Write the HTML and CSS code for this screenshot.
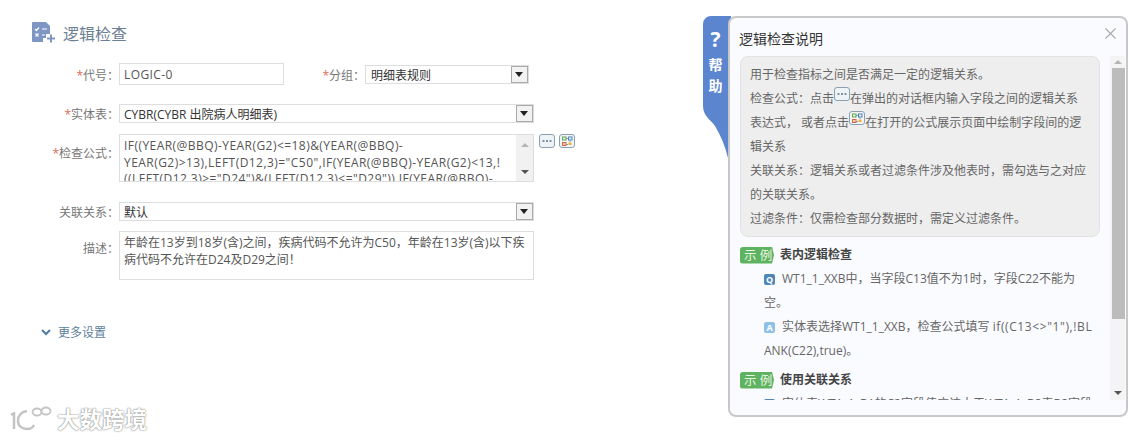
FILE: index.html
```html
<!DOCTYPE html>
<html lang="en">
<head>
    <meta charset="UTF-8">
    <meta name="viewport" content="width=device-width, initial-scale=1.0">
    <title>逻辑检查</title>
    <link rel="stylesheet" href="styles.css">
</head>
<body>
    <svg class="defs" width="0" height="0">
        <symbol id="icon-more" viewBox="0 0 16 14">
            <rect x="0.5" y="0.5" width="15" height="13" rx="2.5" fill="#eef3f6" stroke="#8ba0b3"/>
            <rect x="3.500" y="6" width="2" height="2" fill="#7d93a6"/>
            <rect x="7" y="6" width="2" height="2" fill="#7d93a6"/>
            <rect x="10.500" y="6" width="2" height="2" fill="#7d93a6"/>
        </symbol>
        <symbol id="icon-formula" viewBox="0 0 16 14">
            <rect x="0.5" y="0.5" width="15" height="13" rx="2.5" fill="#f2f4f6" stroke="#8ba0b3"/>
            <path d="M7 4.500h2M11 6.500v1.500M7 10.500h2" stroke="#8ba0b3" fill="none"/>
            <rect x="3.500" y="3" width="3.500" height="3" fill="none" stroke="#5aa84f"/>
            <rect x="9.500" y="3" width="3.500" height="3" fill="none" stroke="#4a7fc1"/>
            <rect x="3.500" y="8.500" width="3.500" height="3" fill="#f6d9a0" stroke="#d9634f"/>
            <rect x="9.500" y="8.500" width="3" height="2.500" fill="#e8b23c"/>
        </symbol>
    </svg>

    <div class="page">
        <div class="page-title">
            <svg class="title-icon" width="24" height="22" viewBox="0 0 24 22">
                <path d="M1 0h13l4 4v8h-4v4h-3v4H1a1 1 0 0 1-1-1V1a1 1 0 0 1 1-1z" fill="#7d96c4"/>
                <path d="M3 7l1.500 1.500L7 5.500M10 7h5M3.500 11.500l3 3M6.500 11.500l-3 3M10 13h3" stroke="#fff" stroke-width="1.200" fill="none"/>
                <path d="M15 16.500h8M19 12.500v8" stroke="#7d96c4" stroke-width="2" fill="none"/>
            </svg>
            <span>逻辑检查</span>
        </div>

        <div class="row row-code">
            <label class="label"><em>*</em>代号：</label>
            <div class="input">LOGIC-0</div>
            <label class="label label-group"><em>*</em>分组：</label>
            <div class="select select-group"><span>明细表规则</span><i class="arrow"></i></div>
        </div>

        <div class="row row-entity">
            <label class="label"><em>*</em>实体表：</label>
            <div class="select"><span>CYBR(CYBR 出院病人明细表)</span><i class="arrow"></i></div>
        </div>

        <div class="row row-top row-formula">
            <label class="label"><em>*</em>检查公式：</label>
            <div class="textarea formula">
                <div class="formula-text">IF((YEAR(@BBQ)-YEAR(G2)&lt;=18)&amp;(YEAR(@BBQ)-<br>YEAR(G2)&gt;13),LEFT(D12,3)="C50",IF(YEAR(@BBQ)-YEAR(G2)&lt;13,!<br>((LEFT(D12,3)&gt;="D24")&amp;(LEFT(D12,3)&lt;="D29")),IF(YEAR(@BBQ)-</div>
                <div class="mini-scroll"><i class="up"></i><i class="down"></i></div>
            </div>
            <div class="formula-tools">
                <svg width="16" height="14"><use href="#icon-more"/></svg>
                <svg width="16" height="14"><use href="#icon-formula"/></svg>
            </div>
        </div>

        <div class="row row-relation">
            <label class="label">关联关系：</label>
            <div class="select"><span>默认</span><i class="arrow"></i></div>
        </div>

        <div class="row row-top row-desc">
            <label class="label">描述：</label>
            <div class="textarea desc">年龄在13岁到18岁(含)之间，疾病代码不允许为C50，年龄在13岁(含)以下疾<br>病代码不允许在D24及D29之间！</div>
        </div>

        <div class="more">
            <svg width="10" height="7" viewBox="0 0 10 7"><path d="M1 1l4 4 4-4" fill="none" stroke="#4d7ba6" stroke-width="2"/></svg>
            <span>更多设置</span>
        </div>
    </div>

    <!-- help panel floats over the page -->
    <div class="help-tab">
        <svg class="help-tab-bg" width="28" height="142" viewBox="0 0 28 142">
            <path d="M8 0H28V142H25C22 130 18 120 12 110C8 104 0 100 0 90V8A8 8 0 0 1 8 0z" fill="#5b86cf"/>
        </svg>
        <b class="help-q">?</b>
        <b class="help-word">帮</b>
        <b class="help-word">助</b>
    </div>
    <div class="help">
        <div class="help-head">
            <span>逻辑检查说明</span>
            <svg class="help-close" width="11" height="11" viewBox="0 0 11 11"><path d="M0.500 0.500l10 10M10.500 0.500l-10 10" stroke="#aaa" stroke-width="1.100"/></svg>
        </div>
        <div class="help-body">
            <div class="help-scroll">
                <div class="help-box">
                    <p>用于检查指标之间是否满足一定的逻辑关系。</p>
                    <p>检查公式：点击<svg class="inline-icon" width="16" height="14"><use href="#icon-more"/></svg>在弹出的对话框内输入字段之间的逻辑关系</p>
                    <p>表达式， 或者点击<svg class="inline-icon" width="16" height="14"><use href="#icon-formula"/></svg>在打开的公式展示页面中绘制字段间的逻</p>
                    <p>辑关系</p>
                    <p>关联关系：逻辑关系或者过滤条件涉及他表时，需勾选与之对应</p>
                    <p>的关联关系。</p>
                    <p>过滤条件：仅需检查部分数据时，需定义过滤条件。</p>
                </div>
                <div class="example">
                    <div class="example-head"><span class="tag">示 例</span><strong>表内逻辑检查</strong></div>
                    <p class="first"><i class="qa q">Q</i>WT1_1_XXB中，当字段C13值不为1时，字段C22不能为</p>
                    <p>空。</p>
                    <p class="first"><i class="qa a">A</i>实体表选择WT1_1_XXB，检查公式填写 <span class="wide">if((C13&lt;&gt;"1"),!BL</span></p>
                    <p>ANK(C22),true)。</p>
                </div>
                <div class="example">
                    <div class="example-head"><span class="tag">示 例</span><strong>使用关联关系</strong></div>
                    <p class="first"><i class="qa q">Q</i>实体表WT1_1_B1的C2字段值应该大于WT1_1_B2表B2字段</p>
                </div>
            </div>
            <div class="help-bar">
                <i class="up"></i>
                <div class="help-thumb"></div>
                <i class="down"></i>
            </div>
        </div>
    </div>

    <div class="watermark">
        <svg width="46" height="30" viewBox="0 0 46 30">
            <g fill="none" stroke="#c4c4c4" stroke-width="2.500">
                <path d="M6 9L3 11M6 8v17"/>
                <path d="M19 7c-6 1-9 5-9 10s4 8 9 8 6-2 7-4"/>
            </g>
            <g fill="none" stroke="#c4c4c4" stroke-width="1.800">
                <ellipse cx="29" cy="8" rx="4.500" ry="3.500"/>
                <ellipse cx="38" cy="7" rx="4.500" ry="3.500"/>
            </g>
        </svg>
        <span>大数跨境</span>
    </div>
</body>
</html>
```

FILE: styles.css
```css
* {
    box-sizing: border-box;
}
body {
    margin: 0;
    height: 440px;
    overflow: hidden;
    background-color: #fff;
    font-family: "Open Sans", "Noto Sans CJK SC", sans-serif;
    font-size: 12px;
    color: #666;
}
.defs {
    position: absolute;
}
.page {
    padding-top: 22px;
}
.page-title {
    display: flex;
    align-items: center;
    height: 22px;
    padding-left: 32px;
    font-size: 16px;
    color: #6c8094;
}
.page-title span {
    margin-left: 7px;
}
.row {
    display: flex;
    align-items: center;
}
.row-top {
    align-items: flex-start;
}
.row-code {
    margin-top: 19px;
    height: 22px;
}
.row-entity {
    margin-top: 18px;
}
.row-formula {
    margin-top: 11px;
}
.row-relation {
    margin-top: 19px;
}
.row-desc {
    margin-top: 10px;
}
.label {
    flex: none;
    width: 119px;
    padding-top: 2px;
    text-align: right;
    color: #777;
}
.row-formula .label {
    padding-top: 10px;
}
.row-desc .label {
    padding-top: 8px;
}
.label em {
    font-style: normal;
    color: #e06a5a;
}
.label-group {
    width: 81px;
}
.input {
    width: 165px;
    height: 22px;
    line-height: 22px;
    padding-left: 4px;
    border: 1px solid #ddd;
    letter-spacing: 0.4px;
    color: #555;
}
.select {
    display: flex;
    justify-content: space-between;
    align-items: center;
    width: 415px;
    height: 19px;
    padding-left: 4px;
    border: 1px solid #ddd;
    color: #333;
}
.select span {
    padding-top: 2px;
}
.select-group {
    width: 164px;
    padding-left: 5px;
}
.arrow {
    flex: none;
    width: 17px;
    height: 17px;
    background-color: #f2f2f2;
    border: 1px solid #aaa;
    position: relative;
}
.arrow::after {
    content: "";
    position: absolute;
    left: 3px;
    top: 5px;
    border-left: 4px solid transparent;
    border-right: 4px solid transparent;
    border-top: 5px solid #222;
}
.textarea {
    width: 415px;
    border: 1px solid #ddd;
    color: #555;
}
.formula {
    display: flex;
    height: 48px;
    overflow: hidden;
}
.formula-text {
    flex: 1;
    padding: 3px 0 0 4px;
    line-height: 16.500px;
    letter-spacing: 0.45px;
    white-space: nowrap;
    overflow: hidden;
}
.mini-scroll {
    flex: none;
    display: flex;
    flex-direction: column;
    justify-content: space-between;
    align-items: center;
    width: 17px;
    padding: 8px 0 7px;
    background-color: #f1f1f1;
}
.up,
.down {
    display: block;
    border-left: 4px solid transparent;
    border-right: 4px solid transparent;
}
.up {
    border-bottom: 4px solid #b5b5b5;
}
.down {
    border-top: 4px solid #555;
}
.formula-tools {
    display: flex;
    gap: 4px;
    margin-left: 5px;
}
.desc {
    height: 49px;
    padding: 3px 0 0 4px;
    line-height: 16.500px;
}
.more {
    display: flex;
    align-items: center;
    margin-top: 43px;
    padding-left: 41px;
    color: #5d7f9c;
}
.more span {
    margin-left: 7px;
}
.help-tab {
    position: absolute;
    left: 703px;
    top: 16px;
    width: 28px;
    height: 142px;
    display: flex;
    flex-direction: column;
    padding: 9px 0 0 0;
    color: #fff;
    text-align: center;
}
.help-tab-bg {
    position: absolute;
    left: 0;
    top: 0;
}
.help-q,
.help-word {
    position: relative;
    width: 25px;
}
.help-q {
    font-size: 21px;
    line-height: 28px;
}
.help-word {
    font-size: 14px;
    line-height: 21px;
}
.help-q + .help-word {
    margin-top: 1px;
}
.help {
    position: absolute;
    left: 728px;
    top: 16px;
    width: 400px;
    height: 401px;
    display: flex;
    flex-direction: column;
    background-color: #fafbff;
    border: 2px solid #c8c8c8;
    border-radius: 8px;
}
.help-head {
    flex: none;
    display: flex;
    justify-content: space-between;
    height: 38px;
    padding: 10px 10px 0 9px;
    font-size: 14px;
    color: #333;
}
.help-body {
    flex: none;
    display: flex;
    justify-content: space-between;
    height: 344px;
}
.help-scroll {
    width: 360px;
    margin-left: 10px;
    overflow: hidden;
}
.help-box {
    padding: 6px 9px 5px;
    background-color: #eee;
    border: 1px solid #e2e2e2;
    border-radius: 8px;
    line-height: 24px;
}
.help-scroll p {
    margin: 0;
    white-space: nowrap;
}
.inline-icon {
    vertical-align: -1px;
    position: relative;
    top: -3px;
}
.example {
    line-height: 24px;
}
.example p {
    padding-left: 24px;
}
.help-box + .example {
    margin-top: 6px;
}
.example + .example {
    margin-top: 5px;
}
.example-head {
    display: flex;
    align-items: center;
    height: 24px;
}
.example-head strong {
    margin-left: 6px;
    font-weight: 600;
    color: #444;
}
.tag {
    flex: none;
    width: 34px;
    height: 17px;
    line-height: 17px;
    padding-left: 4px;
    border-radius: 3px 0 0 3px;
    background-color: #5eb360;
    color: #e8f5e4;
    font-size: 12.500px;
    white-space: nowrap;
    clip-path: polygon(0 0, calc(100% - 2px) 0, 100% 50%, calc(100% - 2px) 100%, 0 100%);
}
.qa {
    display: inline-block;
    width: 11px;
    height: 11px;
    margin-right: 7px;
    border-radius: 2px;
    font-style: normal;
    font-size: 9px;
    font-weight: 700;
    line-height: 11px;
    text-align: center;
    color: #fff;
}
.q {
    background-color: #4f86b8;
}
.a {
    background-color: #8fc1e8;
}
.wide {
    letter-spacing: 0.6px;
}
.help-bar {
    flex: none;
    display: flex;
    flex-direction: column;
    align-items: center;
    width: 15px;
    margin-right: 1px;
    padding: 4px 0 5px;
    background-color: #f4f4f6;
}
.help-thumb {
    width: 13px;
    height: 251px;
    margin: 4px 0 auto 1px;
    background-color: #bcbcbc;
}
.watermark {
    position: absolute;
    left: 8px;
    bottom: 5px;
    display: flex;
    align-items: center;
    gap: 3px;
    font-size: 22.500px;
    font-weight: 700;
    color: #fff;
    text-shadow: 0 0 2px #888, 0 0 1px #888;
}
```
